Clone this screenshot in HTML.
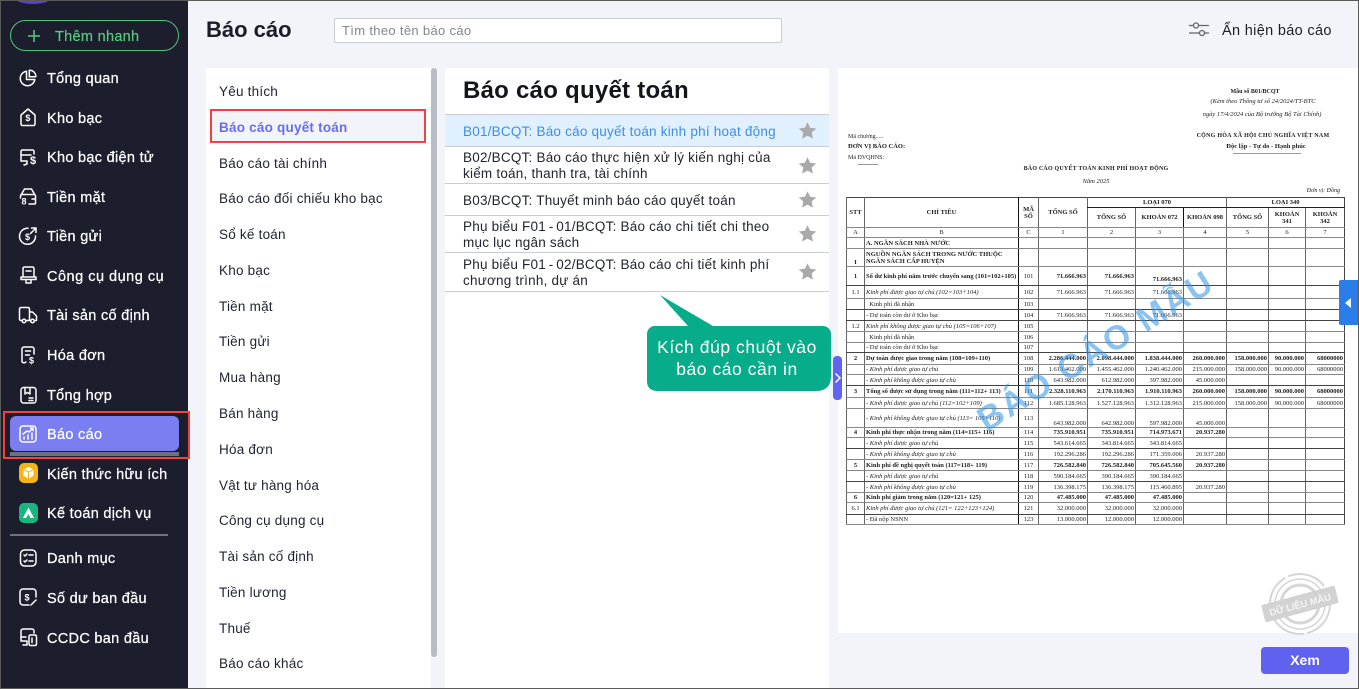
<!DOCTYPE html>
<html lang="vi"><head><meta charset="utf-8"><title>Báo cáo</title>
<style>
*{box-sizing:border-box}
html,body{margin:0;padding:0;width:1359px;height:689px;overflow:hidden;background:#f3f4f9;font-family:"Liberation Sans","DejaVu Sans",sans-serif;color:#1d1f2b}
.a{position:absolute;white-space:nowrap}
.nav{position:absolute;left:47px;margin-top:2px;color:#fff;font-size:14.5px;line-height:20px;white-space:nowrap;letter-spacing:.3px;-webkit-text-stroke:.25px #fff}
.ic{position:absolute;left:18px;width:20px;height:20px;fill:none;stroke:#fff;stroke-width:1.5;stroke-linecap:round;stroke-linejoin:round}
.ic text{font:bold 9px "Liberation Sans",sans-serif;fill:#fff;stroke:none}
.li{position:absolute;left:219px;margin-top:2px;font-size:13.5px;line-height:18px;white-space:nowrap;letter-spacing:.22px;color:#1f2230}
.ln{position:absolute;left:445px;width:384px;height:1px;background:#c9cbd9}
.r{position:absolute;left:463px;margin-top:1px;font-size:13.5px;line-height:16px;white-space:nowrap;letter-spacing:.22px;color:#23252f}
.st{position:absolute;left:798px;width:19px;height:19px;fill:#a9a9a9}
.d{position:absolute;font-family:"Liberation Serif",serif;font-size:6px;line-height:8px;white-space:nowrap;color:#222;filter:blur(.3px)}
table{position:absolute;left:846px;top:197px;width:498px;border-collapse:collapse;table-layout:fixed;font-family:"Liberation Serif",serif;font-size:6.5px;line-height:7px;color:#222;border:1px solid #444;filter:blur(.3px)}
td{padding:0 1px;overflow:hidden;white-space:nowrap;border-left:1px solid #666;border-bottom:1px solid #888;text-align:right;vertical-align:middle}
td.c{text-align:center}td.l{text-align:left}
tr.b td{font-weight:bold}
tr.i td:nth-child(2){font-style:italic}
tr.k td{border-bottom:1px solid #444}
td:nth-child(3){border-left:1px solid #111}
.h{margin:0 2.800px}
</style></head><body>

<!-- sidebar -->
<div class="a" style="left:0;top:0;width:188px;height:689px;background:#1c1e2e"></div>
<div class="a" style="left:15px;top:-8px;width:36px;height:12px;border-radius:50%;background:#5a3fd8"></div>

<div class="a" style="left:10px;top:20px;width:169px;height:31px;border:1px solid #4fc47c;border-radius:16px"></div>
<svg class="a" style="left:27px;top:28px" width="14" height="16" fill="none" stroke="#58c97f" stroke-width="1.5"><path d="M7 2v12M1 8h12"/></svg>
<div class="nav" style="left:55px;top:25px;color:#58c97f;-webkit-text-stroke:.2px #58c97f">Thêm nhanh</div>

<svg class="ic" style="top:68px" viewBox="0 0 20 20"><path d="M8.5 3.2a7.3 7.3 0 1 0 8.3 8.3h-8.3z"/><path d="M11.3 2.2a6.2 6.2 0 0 1 6.5 6.5h-6.5z"/></svg>
<div class="nav" style="top:67px">Tổng quan</div>
<svg class="ic" style="top:107px" viewBox="0 0 20 20"><path d="M3 8l7-6 7 6v9a1.5 1.5 0 0 1-1.5 1.5h-11A1.5 1.5 0 0 1 3 17z"/><text x="7.4" y="14">$</text></svg>
<div class="nav" style="top:107px">Kho bạc</div>
<svg class="ic" style="top:147px" viewBox="0 0 20 20"><path d="M9 14H3V4.500A1.500 1.500 0 0 1 4.500 3h10A1.500 1.500 0 0 1 16 4.500V7M3 8h10M6 18l3-1v-3"/><text x="12" y="17" style="font-size:11px">$</text></svg>
<div class="nav" style="top:146px">Kho bạc điện tử</div>
<svg class="ic" style="top:186px" viewBox="0 0 20 20"><path d="M3 9l3.500-6h7L17 9M2.500 12V10a1.500 1.500 0 0 1 1.500-1.500h12A1.500 1.500 0 0 1 17.500 10v7a1 1 0 0 1-1 1H11M14 13h3.500"/><text x="3.500" y="18.500">8</text></svg>
<div class="nav" style="top:186px">Tiền mặt</div>
<svg class="ic" style="top:226px" viewBox="0 0 20 20"><path d="M17.500 10A8 8 0 1 1 10 2.300M12.500 7.500L18 2M13.500 2H18v4.500"/><text x="7" y="14">$</text></svg>
<div class="nav" style="top:225px">Tiền gửi</div>
<svg class="ic" style="top:265px" viewBox="0 0 20 20"><path d="M5 12V3.500A1.500 1.500 0 0 1 6.500 2h8A1.500 1.500 0 0 1 16 3.500V12M3 12h15v2.500H3zM8 14.500V18h5v-3.500M8 6h5"/></svg>
<div class="nav" style="top:265px;letter-spacing:.5px">Công cụ dụng cụ</div>
<svg class="ic" style="top:305px" viewBox="0 0 20 20"><path d="M4 15.500H3A1.500 1.500 0 0 1 1.500 14V4A1.500 1.500 0 0 1 3 2.500h7A1.500 1.500 0 0 1 11.500 4v11.500H8M11.500 7h3l4 4v4.500h-1.500"/><circle cx="6" cy="16" r="1.800"/><circle cx="14.500" cy="16" r="1.800"/></svg>
<div class="nav" style="top:304px">Tài sản cố định</div>
<svg class="ic" style="top:345px" viewBox="0 0 20 20"><path d="M4 17V4a2 2 0 0 1 2-2h8a2 2 0 0 1 2 2v5M4 17l2 1 2-1M7.500 6h5M7.500 10h4"/><text x="11" y="18.500">$</text></svg>
<div class="nav" style="top:344px">Hóa đơn</div>
<svg class="ic" style="top:385px" viewBox="0 0 20 20"><rect x="3" y="2.500" width="15" height="15.500" rx="2.500"/><path d="M7 2.500V9l2.500-1.500L12 9V2.500M11 13h4M11 15.500h4"/></svg>
<div class="nav" style="top:384px">Tổng hợp</div>

<div class="a" style="left:3px;top:411px;width:187px;height:48px;border:2.500px solid #f4403f"></div>
<div class="a" style="left:10px;top:416px;width:169px;height:35px;background:#7a7ef0;border-radius:6px"></div>
<div class="a" style="left:10px;top:452px;width:169px;height:4px;background:#6e7080"></div>
<svg class="ic" style="top:424px" viewBox="0 0 20 20"><rect x="2" y="2" width="16" height="16" rx="3"/><path d="M5 10l4-3 2 1 4-4M12.500 4H15v2.500M6 15v-2M10 15v-4M14 15V9"/></svg>
<div class="nav" style="top:423px">Báo cáo</div>

<svg class="a" style="left:19px;top:463px" width="19" height="20" viewBox="0 0 19 20"><rect width="19" height="20" rx="5" fill="#f5b515"/><path d="M9.500 4l5 2.500v6L9.500 16l-5-3.500v-6z" fill="#fff"/><path d="M9.500 9v7M4.500 6.500l5 2.500 5-2.500" stroke="#f5b515" fill="none"/></svg>
<div class="nav" style="top:463px">Kiến thức hữu ích</div>
<svg class="a" style="left:19px;top:503px" width="19" height="20" viewBox="0 0 19 20"><rect width="19" height="20" rx="5" fill="#19b57f"/><path d="M9.500 4.500L15 15h-3.500L9.500 11 7 15H4z" fill="#fff"/></svg>
<div class="nav" style="top:502px">Kế toán dịch vụ</div>
<div class="a" style="left:10px;top:534px;width:158px;height:2px;background:#70727f"></div>

<svg class="ic" style="top:548px" viewBox="0 0 20 20"><rect x="2.500" y="2" width="15.500" height="16" rx="4"/><path d="M6 7l1 1 2-2M6 13l1 1 2-2M11 7h4M11 13h4"/></svg>
<div class="nav" style="top:547px">Danh mục</div>
<svg class="ic" style="top:587px" viewBox="0 0 20 20"><path d="M18 10V5a3 3 0 0 0-3-3H5a3 3 0 0 0-3 3v10a3 3 0 0 0 3 3h6M13 18l5-5"/><text x="6.500" y="13.500">$</text></svg>
<div class="nav" style="top:587px">Số dư ban đầu</div>
<svg class="ic" style="top:627px" viewBox="0 0 20 20"><path d="M8 14H3V4a2 2 0 0 1 2-2h9a2 2 0 0 1 2 2v2M3 10h5M5 18h4v-4"/><rect x="11" y="8" width="7.500" height="10.500" rx="1.500"/><path d="M14 11v4.500"/></svg>
<div class="nav" style="top:627px">CCDC ban đầu</div>

<!-- top bar -->
<div class="a" style="left:206px;top:16px;font-size:22px;line-height:28px;font-weight:bold;color:#1b1d28">Báo cáo</div>
<div class="a" style="left:334px;top:18px;width:448px;height:25px;background:#fff;border:1px solid #c9cbd2;border-radius:2px"></div>
<div class="a" style="left:342px;top:22px;font-size:13px;line-height:17px;color:#82858f;letter-spacing:.33px">Tìm theo tên báo cáo</div>
<svg class="a" style="left:1189px;top:21px" width="20" height="17" viewBox="0 0 20 17" fill="none" stroke="#666" stroke-width="1.300"><path d="M0 4.500h4.500M9.500 4.500H20M0 12h10.500M15.500 12H20"/><circle cx="7" cy="4.500" r="2.500"/><circle cx="13" cy="12" r="2.500"/></svg>
<div class="a" style="left:1222px;top:21px;font-size:14.500px;line-height:20px;color:#1b1d28;letter-spacing:.33px">Ẩn hiện báo cáo</div>

<!-- list -->
<div class="a" style="left:206px;top:68px;width:225px;height:621px;background:#fff"></div>
<div class="a" style="left:431px;top:68px;width:6px;height:589px;background:#b8bcc4;border-radius:3px"></div>
<div class="a" style="left:210px;top:109px;width:216px;height:34px;background:#f3f4f9;border:2.500px solid #f4403f"></div>
<div class="li" style="top:81px">Yêu thích</div>
<div class="li" style="top:117px;font-weight:bold;color:#6a6cf0">Báo cáo quyết toán</div>
<div class="li" style="top:153px">Báo cáo tài chính</div>
<div class="li" style="top:188px">Báo cáo đối chiếu kho bạc</div>
<div class="li" style="top:224px">Sổ kế toán</div>
<div class="li" style="top:260px">Kho bạc</div>
<div class="li" style="top:296px">Tiền mặt</div>
<div class="li" style="top:331px">Tiền gửi</div>
<div class="li" style="top:367px">Mua hàng</div>
<div class="li" style="top:403px">Bán hàng</div>
<div class="li" style="top:439px">Hóa đơn</div>
<div class="li" style="top:475px">Vật tư hàng hóa</div>
<div class="li" style="top:510px">Công cụ dụng cụ</div>
<div class="li" style="top:546px">Tài sản cố định</div>
<div class="li" style="top:582px">Tiền lương</div>
<div class="li" style="top:618px">Thuế</div>
<div class="li" style="top:653px">Báo cáo khác</div>

<!-- centre -->
<div class="a" style="left:445px;top:68px;width:384px;height:621px;background:#fff"></div>
<div class="a" style="left:463px;top:76px;font-size:24px;line-height:30px;font-weight:bold;color:#14151c;letter-spacing:.25px">Báo cáo quyết toán</div>
<div class="a" style="left:445px;top:115px;width:384px;height:31px;background:#e1f0fe"></div>
<div class="ln" style="top:114px"></div><div class="ln" style="top:146px"></div><div class="ln" style="top:183px"></div><div class="ln" style="top:215px"></div><div class="ln" style="top:252px"></div><div class="ln" style="top:291px"></div>
<div class="r" style="top:123px;color:#3d8ee8">B01/BCQT: Báo cáo quyết toán kinh phí hoạt động</div>
<div class="r" style="top:149px">B02/BCQT: Báo cáo thực hiện xử lý kiến nghị của</div>
<div class="r" style="top:165px">kiểm toán, thanh tra, tài chính</div>
<div class="r" style="top:192px">B03/BCQT: Thuyết minh báo cáo quyết toán</div>
<div class="r" style="top:218px">Phụ biểu F01<span class="h">-</span>01/BCQT: Báo cáo chi tiết chi theo</div>
<div class="r" style="top:234px">mục lục ngân sách</div>
<div class="r" style="top:256px">Phụ biểu F01<span class="h">-</span>02/BCQT: Báo cáo chi tiết kinh phí</div>
<div class="r" style="top:272px">chương trình, dự án</div>
<svg class="st" style="top:121px" viewBox="0 0 24 24"><path d="M12 1.500l3.300 7 7.700.900-5.700 5.200 1.500 7.600L12 18.400l-6.800 3.800 1.500-7.600L1 9.400l7.700-.900z"/></svg>
<svg class="st" style="top:156px" viewBox="0 0 24 24"><path d="M12 1.500l3.300 7 7.700.900-5.700 5.200 1.500 7.600L12 18.400l-6.800 3.800 1.500-7.600L1 9.400l7.700-.900z"/></svg>
<svg class="st" style="top:190px" viewBox="0 0 24 24"><path d="M12 1.500l3.300 7 7.700.900-5.700 5.200 1.500 7.600L12 18.400l-6.800 3.800 1.500-7.600L1 9.400l7.700-.900z"/></svg>
<svg class="st" style="top:224px" viewBox="0 0 24 24"><path d="M12 1.500l3.300 7 7.700.900-5.700 5.200 1.500 7.600L12 18.400l-6.800 3.800 1.500-7.600L1 9.400l7.700-.900z"/></svg>
<svg class="st" style="top:262px" viewBox="0 0 24 24"><path d="M12 1.500l3.300 7 7.700.900-5.700 5.200 1.500 7.600L12 18.400l-6.800 3.800 1.500-7.600L1 9.400l7.700-.900z"/></svg>

<!-- preview -->
<div class="a" style="left:838px;top:68px;width:521px;height:565px;background:#fff"></div>
<div class="d" style="left:1195px;width:120px;text-align:center;top:88px;font-weight:bold">Mẫu số B01/BCQT</div>
<div class="d" style="left:1203px;width:120px;text-align:center;top:98px;font-style:italic;font-size:6.500px">(Kèm theo Thông tư số 24/2024/TT-BTC</div>
<div class="d" style="left:1201px;width:122px;text-align:center;top:111px;font-style:italic;font-size:6.500px">ngày 17/4/2024 của Bộ trưởng Bộ Tài Chính)</div>
<div class="d" style="left:848px;top:133px">Mã chương.....</div>
<div class="d" style="left:848px;top:143px;font-weight:bold;font-size:6.500px">ĐƠN VỊ BÁO CÁO:</div>
<div class="d" style="left:848px;top:154px">Mã ĐVQHNS:</div>
<div class="a" style="left:858px;top:164px;width:20px;height:1px;background:#999"></div>
<div class="d" style="left:1195px;top:132px;width:136px;text-align:center;font-weight:bold;letter-spacing:.25px">CỘNG HÒA XÃ HỘI CHỦ NGHĨA VIỆT NAM</div>
<div class="d" style="left:1226px;top:143px;width:80px;text-align:center;font-weight:bold;font-size:6.500px">Độc lập - Tự do - Hạnh phúc</div>
<div class="a" style="left:1233px;top:153px;width:68px;height:1px;background:#999"></div>
<div class="d" style="left:1021px;top:165px;width:150px;text-align:center;font-weight:bold;letter-spacing:.2px">BÁO CÁO QUYẾT TOÁN KINH PHÍ HOẠT ĐỘNG</div>
<div class="d" style="left:1071px;top:178px;width:50px;text-align:center;font-style:italic;font-size:6.500px">Năm 2025</div>
<div class="d" style="left:1290px;top:187px;width:50px;text-align:right;font-style:italic">Đơn vị: Đồng</div>

<table>
<colgroup><col style="width:18px"><col style="width:154px"><col style="width:20px"><col style="width:49px"><col style="width:48px"><col style="width:48px"><col style="width:43px"><col style="width:42px"><col style="width:37px"><col style="width:39px"></colgroup>
<tr style="height:10px;font-weight:bold"><td class="c" rowspan="2"><b>STT</b></td><td class="c" rowspan="2"><b>CHỈ TIÊU</b></td><td class="c" rowspan="2"><b>MÃ<br>SỐ</b></td><td class="c" rowspan="2"><b>TỔNG SỐ</b></td><td class="c" colspan="3" style="border-bottom:1px solid #222"><b>LOẠI 070</b></td><td class="c" colspan="3" style="border-bottom:1px solid #222"><b>LOẠI 340</b></td></tr>
<tr style="height:20px;font-weight:bold"><td class="c">TỔNG SỐ</td><td class="c">KHOẢN 072</td><td class="c">KHOẢN 098</td><td class="c">TỔNG SỐ</td><td class="c">KHOẢN<br>341</td><td class="c">KHOẢN<br>342</td></tr>
<tr style="height:10px"><td class="c">A</td><td class="c">B</td><td class="c">C</td><td class="c">1</td><td class="c">2</td><td class="c">3</td><td class="c">4</td><td class="c">5</td><td class="c">6</td><td class="c">7</td></tr>
<tr style="height:11px" class="b"><td></td><td class="l">A. NGÂN SÁCH NHÀ NƯỚC</td><td></td><td></td><td></td><td></td><td></td><td></td><td></td><td></td></tr>
<tr style="height:18px" class="b"><td class="c" style="vertical-align:bottom">I</td><td class="l">NGUỒN NGÂN SÁCH TRONG NƯỚC THUỘC<br>NGÂN SÁCH CẤP HUYỆN</td><td></td><td></td><td></td><td></td><td></td><td></td><td></td><td></td></tr>
<tr style="height:19px" class="b k"><td class="c">1</td><td class="l">Số dư kinh phí năm trước chuyển sang (101=102+105)</td><td class="c" style="font-weight:normal">101</td><td>71.666.963</td><td>71.666.963</td><td style="padding-top:6px">71.666.963</td><td></td><td></td><td></td><td></td></tr>
<tr style="height:13px" class="i"><td class="c">1.1</td><td class="l">Kinh phí được giao tự chủ (102=103+104)</td><td class="c">102</td><td>71.666.963</td><td>71.666.963</td><td>71.666.963</td><td></td><td></td><td></td><td></td></tr>
<tr style="height:11px" class="k"><td></td><td class="l">&nbsp;&nbsp;Kinh phí đã nhận</td><td class="c">103</td><td></td><td></td><td></td><td></td><td></td><td></td><td></td></tr>
<tr style="height:11px" class="k"><td></td><td class="l">- Dự toán còn dư ở Kho bạc</td><td class="c">104</td><td>71.666.963</td><td>71.666.963</td><td>71.666.963</td><td></td><td></td><td></td><td></td></tr>
<tr style="height:11px" class="i"><td class="c">1.2</td><td class="l">Kinh phí không được giao tự chủ (105=106+107)</td><td class="c">105</td><td></td><td></td><td></td><td></td><td></td><td></td><td></td></tr>
<tr style="height:11px"><td></td><td class="l">&nbsp;&nbsp;Kinh phí đã nhận</td><td class="c">106</td><td></td><td></td><td></td><td></td><td></td><td></td><td></td></tr>
<tr style="height:10px" class="k"><td></td><td class="l">- Dự toán còn dư ở Kho bạc</td><td class="c">107</td><td></td><td></td><td></td><td></td><td></td><td></td><td></td></tr>
<tr style="height:12px" class="b"><td class="c">2</td><td class="l">Dự toán được giao trong năm (108=109+110)</td><td class="c" style="font-weight:normal">108</td><td>2.286.444.000</td><td>2.098.444.000</td><td>1.838.444.000</td><td>260.000.000</td><td>158.000.000</td><td>90.000.000</td><td>68000000</td></tr>
<tr style="height:10px" class="i"><td></td><td class="l">- Kinh phí được giao tự chủ</td><td class="c">109</td><td>1.613.462.000</td><td>1.455.462.000</td><td>1.240.462.000</td><td>215.000.000</td><td>158.000.000</td><td>90.000.000</td><td>68000000</td></tr>
<tr style="height:11px" class="i k"><td></td><td class="l">- Kinh phí không được giao tự chủ</td><td class="c">110</td><td>643.982.000</td><td>612.982.000</td><td>397.982.000</td><td>45.000.000</td><td></td><td></td><td></td></tr>
<tr style="height:12px" class="b"><td class="c">3</td><td class="l">Tổng số được sử dụng trong năm (111=112+ 113)</td><td class="c" style="font-weight:normal">111</td><td>2.328.110.963</td><td>2.170.110.963</td><td>1.910.110.963</td><td>260.000.000</td><td>158.000.000</td><td>90.000.000</td><td>68000000</td></tr>
<tr style="height:11px" class="i"><td></td><td class="l">- Kinh phí được giao tự chủ (112=102+109)</td><td class="c">112</td><td>1.685.128.963</td><td>1.527.128.963</td><td>1.312.128.963</td><td>215.000.000</td><td>158.000.000</td><td>90.000.000</td><td>68000000</td></tr>
<tr style="height:19px" class="i"><td></td><td class="l">- Kinh phí không được giao tự chủ (113= 105+110)</td><td class="c">113</td><td style="vertical-align:bottom">643.982.000</td><td style="vertical-align:bottom">642.982.000</td><td style="vertical-align:bottom">597.982.000</td><td style="vertical-align:bottom">45.000.000</td><td></td><td></td><td></td></tr>
<tr style="height:10px" class="b"><td class="c">4</td><td class="l">Kinh phí thực nhận trong năm (114=115+ 116)</td><td class="c" style="font-weight:normal">114</td><td>735.910.951</td><td>735.910.951</td><td>714.973.671</td><td>20.937.280</td><td></td><td></td><td></td></tr>
<tr style="height:11px" class="i k"><td></td><td class="l">- Kinh phí được giao tự chủ</td><td class="c">115</td><td>543.614.665</td><td>343.814.665</td><td>343.814.665</td><td></td><td></td><td></td><td></td></tr>
<tr style="height:11px" class="i"><td></td><td class="l">- Kinh phí không được giao tự chủ</td><td class="c">116</td><td>192.296.286</td><td>192.296.286</td><td>171.359.006</td><td>20.937.280</td><td></td><td></td><td></td></tr>
<tr style="height:11px" class="b"><td class="c">5</td><td class="l">Kinh phí đề nghị quyết toán (117=118+ 119)</td><td class="c" style="font-weight:normal">117</td><td>726.582.840</td><td>726.582.840</td><td>705.645.560</td><td>20.937.280</td><td></td><td></td><td></td></tr>
<tr style="height:11px" class="i k"><td></td><td class="l">- Kinh phí được giao tự chủ</td><td class="c">118</td><td>590.184.665</td><td>390.184.665</td><td>390.184.665</td><td></td><td></td><td></td><td></td></tr>
<tr style="height:11px" class="i"><td></td><td class="l">- Kinh phí không được giao tự chủ</td><td class="c">119</td><td>136.398.175</td><td>136.398.175</td><td>115.460.895</td><td>20.937.280</td><td></td><td></td><td></td></tr>
<tr style="height:10px" class="b"><td class="c">6</td><td class="l">Kinh phí giảm trong năm (120=121+ 125)</td><td class="c" style="font-weight:normal">120</td><td>47.485.000</td><td>47.485.000</td><td>47.485.000</td><td></td><td></td><td></td><td></td></tr>
<tr style="height:12px" class="i k"><td class="c">6.1</td><td class="l">Kinh phí được giao tự chủ (121= 122+123+124)</td><td class="c">121</td><td>32.000.000</td><td>32.000.000</td><td>32.000.000</td><td></td><td></td><td></td><td></td></tr>
<tr style="height:10px"><td></td><td class="l">- Đã nộp NSNN</td><td class="c">123</td><td>13.000.000</td><td>12.000.000</td><td>12.000.000</td><td></td><td></td><td></td><td></td></tr>
</table>

<div class="a" style="left:1096px;top:351px;transform:translate(-50%,-50%) rotate(-32deg);font-size:34px;line-height:38px;font-weight:bold;letter-spacing:2.200px;color:rgba(45,145,230,.55)">BÁO CÁO MẪU</div>

<!-- tabs -->
<div class="a" style="left:1339px;top:280px;width:19px;height:45px;background:#2b7de9;border-radius:2px 0 0 2px"></div>
<svg class="a" style="left:1344px;top:297px" width="8" height="12"><path d="M7 1v10L1 6z" fill="#fff"/></svg>
<div class="a" style="left:833px;top:356px;width:9px;height:44px;background:#6164ef;border-radius:4px"></div>
<svg class="a" style="left:834px;top:372px" width="8" height="12" fill="none" stroke="#fff" stroke-width="1.500"><path d="M1.500 1.500L6 6l-4.500 4.500"/></svg>

<!-- callout -->
<svg class="a" style="left:645px;top:293px" width="189" height="100" viewBox="0 0 189 100"><path d="M15 2L43 33H68zM9 33H178a8 8 0 0 1 8 8v42q0 15-15 15H13q-11 0-11-10V41a8 8 0 0 1 7-8z" fill="#07ad8b"/></svg>
<div class="a" style="left:646px;top:336px;width:182px;text-align:center;color:#fff;font-size:17.500px;line-height:22px;letter-spacing:.55px">Kích đúp chuột vào<br>báo cáo cần in</div>

<!-- stamp -->
<svg class="a" style="left:1255px;top:570px" width="90" height="68" viewBox="0 0 90 68"><g fill="none" stroke="#d6d6d6"><circle cx="45" cy="34" r="30" stroke-width="2" stroke-dasharray="40 3"/><circle cx="45" cy="34" r="25" stroke-width="1.500"/><circle cx="45" cy="34" r="19" stroke-width="3"/></g><g transform="rotate(-15 45 34)"><rect x="7" y="25" width="76" height="18" rx="2" fill="#d2d2d2"/><text x="45" y="38" text-anchor="middle" font-family="Liberation Sans" font-weight="bold" font-size="9.500" fill="#f4f4f4">DỮ LIỆU MẪU</text></g></svg>

<!-- button -->
<div class="a" style="left:1261px;top:647px;width:88px;height:27px;background:#6061ef;border-radius:4px;color:#fff;font-size:14px;font-weight:bold;line-height:26px;text-align:center">Xem</div>

<!-- frame -->
<div class="a" style="left:0;top:0;width:1359px;height:689px;border:1px solid #5a5a5a;pointer-events:none"></div>
</body></html>
